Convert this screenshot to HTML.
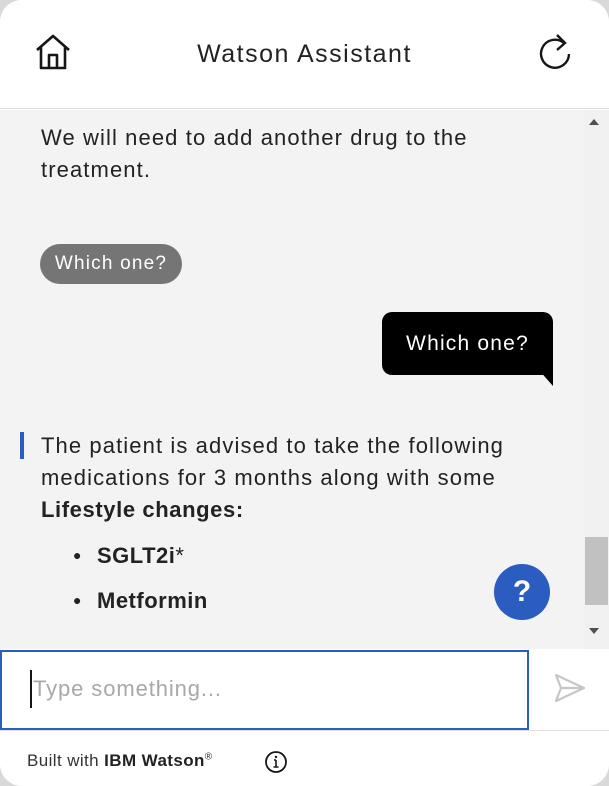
<!DOCTYPE html>
<html><head><style>
*{margin:0;padding:0;box-sizing:border-box}
body{width:609px;height:786px;background:#d9d9d9;font-family:"Liberation Sans",sans-serif;color:#161616;position:relative;overflow:hidden}
.win{position:absolute;left:0;top:0;width:609px;height:786px;background:#fff;border-radius:22px;overflow:hidden}
.hdr{position:absolute;left:0;top:0;width:609px;height:109px;border-bottom:1px solid #dcdcdc;background:#fff}
.title{position:absolute;left:0;width:609px;top:40px;text-align:center;font-size:25px;letter-spacing:1.5px;color:#222}
.chat{position:absolute;left:0;top:110px;width:609px;height:539px;background:#f3f3f3}
.t{position:absolute;left:41px;font-size:22px;line-height:32px;color:#222;letter-spacing:1.1px;white-space:nowrap}
.pill{position:absolute;left:40px;top:244px;width:142px;height:40px;border-radius:20px;background:#757575;color:#fff;font-size:19px;letter-spacing:1.2px;line-height:40px;text-align:center}
.ub{position:absolute;left:382px;top:312px;width:171px;height:63px;background:#000;border-radius:10px;color:#fff;font-size:21px;letter-spacing:1.2px;line-height:63px;text-align:center}
.sb{position:absolute;left:584px;top:110px;width:25px;height:539px;background:#f1f1f1}
.inp{position:absolute;left:0;top:650px;width:529px;height:80px;border:2px solid #2a5dbf;background:#fff}
.ft{position:absolute;left:0;top:730px;width:609px;height:56px;border-top:1px solid #e0e0e0;background:#fff}
</style></head><body><div class="win">
<div class="hdr">
<svg style="position:absolute;left:34px;top:34px" width="40" height="36" viewBox="0 0 40 36"><path d="M3 16 L19 2 L35 16 M7 13 V34 H31 V13 M15 34 V21 H23 V34" fill="none" stroke="#161616" stroke-width="2.6" stroke-linejoin="round"/></svg>
<div class="title">Watson Assistant</div>
<svg style="position:absolute;left:536px;top:32px" width="38" height="42" viewBox="0 0 38 42"><path d="M28 11 A14 14 0 1 0 33 22" fill="none" stroke="#161616" stroke-width="2.4"/><path d="M21 3 L29 11 L21 18" fill="none" stroke="#161616" stroke-width="2.4"/></svg>
</div>
<div class="chat"></div>
<div class="t" style="top:122px">We will need to add another drug to the<br>treatment.</div>
<div class="pill">Which one?</div>
<div class="ub">Which one?</div>
<svg style="position:absolute;left:530px;top:360px" width="24" height="27"><path d="M0 0 H23 V26 Z" fill="#000"/></svg>
<div style="position:absolute;left:20px;top:432px;width:4px;height:27px;background:#2a5dbf"></div>
<div class="t" style="top:430px">The patient is advised to take the following<br>medications for 3 months along with some<br><b style="letter-spacing:0.6px">Lifestyle changes:</b></div>
<div class="t" style="top:540px;left:73px"><span style="font-size:14px;position:relative;top:-3px">●</span>&nbsp;&nbsp;<b style="letter-spacing:0.5px">SGLT2i</b>*</div>
<div class="t" style="top:585px;left:73px"><span style="font-size:14px;position:relative;top:-3px">●</span>&nbsp;&nbsp;<b style="letter-spacing:0.5px">Metformin</b></div>
<div style="position:absolute;left:494px;top:564px;width:56px;height:56px;border-radius:50%;background:#2a5dbf;color:#fff;font-size:30px;font-weight:bold;line-height:56px;text-align:center">?</div>
<div class="sb"><div style="position:absolute;left:5px;top:9px;border:5px solid transparent;border-bottom:6px solid #505050;border-top:0"></div><div style="position:absolute;left:1px;top:427px;width:23px;height:68px;background:#c1c1c1"></div><div style="position:absolute;left:5px;top:518px;border:5px solid transparent;border-top:6px solid #505050;border-bottom:0"></div></div>
<div class="inp"><div style="position:absolute;left:28px;top:18px;width:2px;height:38px;background:#161616"></div><div style="position:absolute;left:31px;top:24px;font-size:22px;letter-spacing:0.9px;color:#a8a8a8">Type something...</div></div>
<svg style="position:absolute;left:553px;top:672px" width="34" height="34" viewBox="0 0 34 34"><path d="M3 3 L31 16 L3 29 L8 16 Z M8 16 H31" fill="none" stroke="#c6c6c6" stroke-width="2.2" stroke-linejoin="round"/></svg>
<div class="ft"><div style="position:absolute;left:27px;top:20px;font-size:17px;letter-spacing:0.4px;color:#333;white-space:nowrap">Built with <b style="color:#222">IBM Watson</b><sup style="font-size:10px">®</sup></div>
<svg style="position:absolute;left:264px;top:19px" width="24" height="24"><circle cx="12" cy="12" r="10" fill="none" stroke="#161616" stroke-width="1.8"/><path d="M12 10 V17 M9.5 17 H14.5 M10 10 H12" stroke="#161616" stroke-width="1.6" fill="none"/><circle cx="12" cy="7" r="1.2" fill="#161616"/></svg></div>
</div></body></html>
